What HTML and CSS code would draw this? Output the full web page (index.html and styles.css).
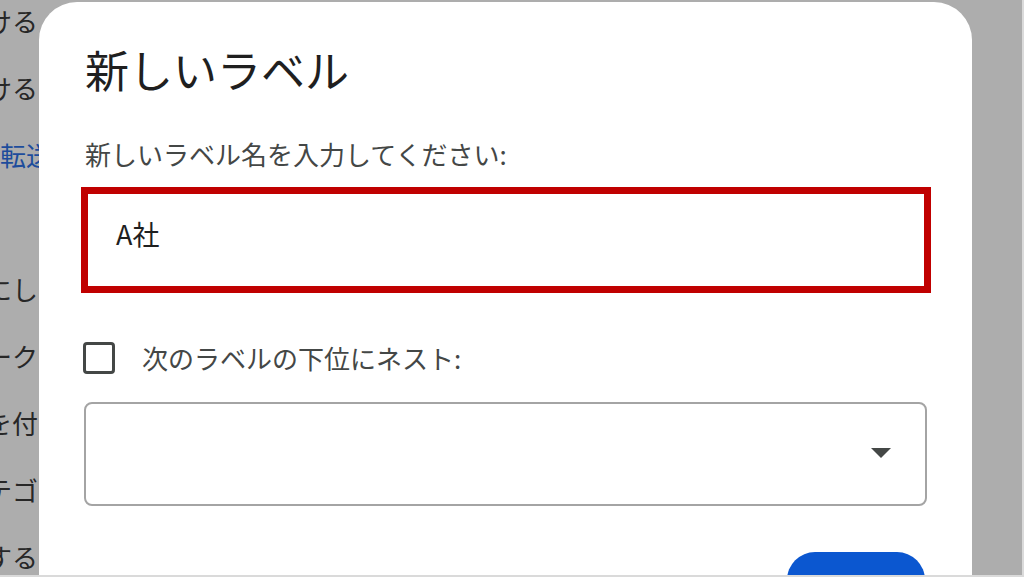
FILE: index.html
```html
<!DOCTYPE html>
<html lang="ja">
<head>
<meta charset="utf-8">
<title>新しいラベル</title>
<link rel="stylesheet" href="styles.css">
</head>
<body>
<div class="screen">
  <ul class="page-lines">
    <li class="cut">ける</li>
    <li class="cut">ける</li>
    <li class="link">転送</li>
    <li></li>
    <li class="cut">にし</li>
    <li class="cut">ーク</li>
    <li class="cut">を付</li>
    <li class="cut">テゴ</li>
    <li class="cut">する</li>
  </ul>

  <div class="dialog" role="dialog" aria-labelledby="dlg-title">
    <h1 class="dialog-title" id="dlg-title">新しいラベル</h1>
    <p class="field-label">新しいラベル名を入力してください:</p>
    <div class="name-field">A社</div>
    <div class="nest-row">
      <span class="checkbox"></span>
      <span class="nest-label">次のラベルの下位にネスト:</span>
    </div>
    <div class="select">
      <svg class="select-arrow" width="20" height="10" viewBox="0 0 20 10"><path d="M0 0 L20 0 L10 10 Z" fill="#444746"/></svg>
    </div>
    <div class="actions">
      <button class="btn-primary">作成</button>
    </div>
  </div>
</div>
</body>
</html>
```

FILE: styles.css
```css
html, body {
  margin: 0;
  padding: 0;
  height: 100%;
  overflow: hidden;
}

body {
  background: #adadad;
  font-family: "Noto Sans CJK JP", "Noto Sans", sans-serif;
}

.screen {
  position: relative;
  width: 1024px;
  height: 577px;
  box-sizing: border-box;
  overflow: hidden;
  border-right: 2px solid #dadada;
  border-bottom: 2px solid #dadada;
}

.page-lines {
  list-style: none;
  margin: -13px 0 0 0;
  padding: 0;
  font-size: 26px;
  color: #272727;
}

.page-lines li {
  height: 67px;
  line-height: 67px;
  white-space: nowrap;
}

.page-lines .cut {
  margin-left: -14px;
}

.page-lines .link {
  color: #1d4c9c;
}

.dialog {
  position: absolute;
  left: 39px;
  top: 2px;
  width: 933px;
  height: 700px;
  box-sizing: border-box;
  background: #ffffff;
  border-radius: 38px;
  padding: 39px 45px 0 45px;
  display: flex;
  flex-direction: column;
}

.dialog-title {
  margin: 0;
  font-size: 44px;
  line-height: 56px;
  font-weight: 400;
  color: #1f1f1f;
  padding-left: 1px;
}

.field-label {
  margin: 40px 0 0 0;
  font-size: 26px;
  line-height: 34px;
  color: #444746;
  padding-left: 1px;
}

.name-field {
  margin: 16px -4px 0 -3px;
  height: 106px;
  box-sizing: border-box;
  border: 7px solid #c00000;
  display: flex;
  align-items: center;
  padding: 0 0 12px 28px;
  font-size: 27px;
  line-height: 36px;
  color: #1f1f1f;
}

.nest-row {
  margin-top: 48px;
  display: flex;
  align-items: center;
  gap: 27px;
}

.checkbox {
  width: 32px;
  height: 32px;
  box-sizing: border-box;
  border: 3px solid #444746;
  border-radius: 4px;
  flex: none;
  margin-left: -1px;
}

.nest-label {
  font-size: 26px;
  line-height: 34px;
  color: #444746;
}

.select {
  margin-top: 27px;
  height: 104px;
  box-sizing: border-box;
  border: 2px solid #a4a4a4;
  border-radius: 8px;
  display: flex;
  align-items: center;
  justify-content: flex-end;
  padding-right: 34px;
}

.select-arrow {
  display: block;
  margin-top: -2px;
}

.actions {
  margin-top: 46px;
  display: flex;
  justify-content: flex-end;
}

.btn-primary {
  width: 138px;
  height: 72px;
  border: none;
  border-radius: 28px;
  background: #0b57d0;
  color: #ffffff;
  font-family: "Noto Sans CJK JP", sans-serif;
  font-size: 26px;
  margin-right: 2px;
}
```
